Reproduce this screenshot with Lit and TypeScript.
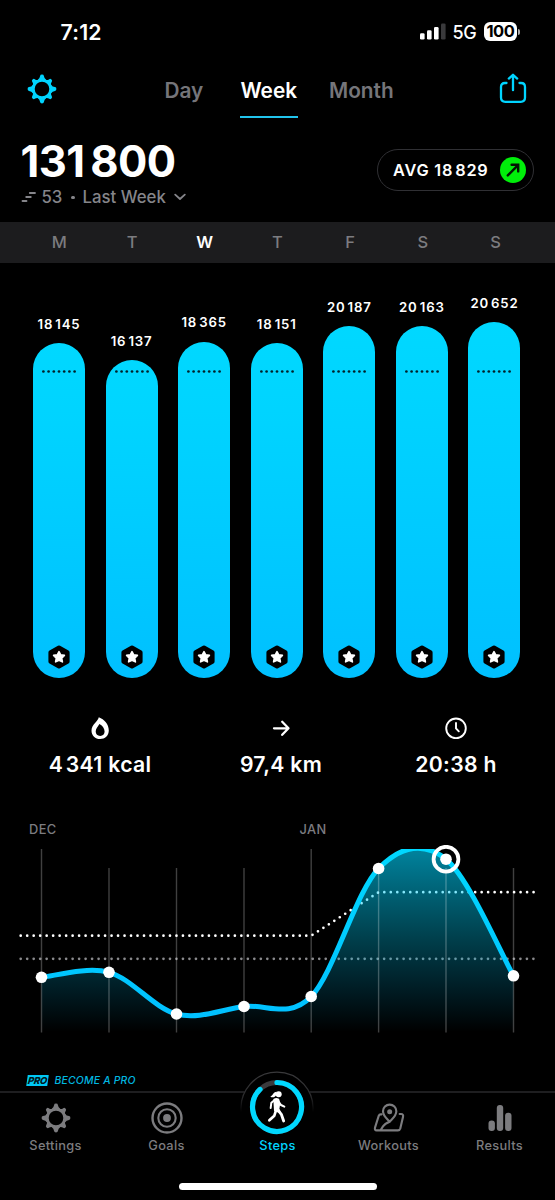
import { LitElement, html, css, svg } from "lit";
import { customElement } from "lit/decorators.js";

const num = (a: string, b: string) => html`${a}<span class="thin">${"\u2009"}</span>${b}`;

const bars = [
  { day: "M", value: num("18", "145"), height: 335 },
  { day: "T", value: num("16", "137"), height: 318 },
  { day: "W", value: num("18", "365"), height: 336.5, active: true },
  { day: "T", value: num("18", "151"), height: 335 },
  { day: "F", value: num("20", "187"), height: 352 },
  { day: "S", value: num("20", "163"), height: 352 },
  { day: "S", value: num("20", "652"), height: 356 },
];

const points: [number, number][] = [
  [41.5, 977.3], [109, 972.3], [176.5, 1014], [244, 1006.5],
  [311.2, 996.5], [378.6, 868.5], [446, 859.2], [513.5, 975.8],
];

// Catmull-Rom spline through the weekly points
function spline(p: [number, number][]): string {
  let d = `M${p[0][0]} ${p[0][1]}`;
  for (let i = 0; i < p.length - 1; i++) {
    const a = p[Math.max(0, i - 1)], b = p[i], c = p[i + 1], e = p[Math.min(p.length - 1, i + 2)];
    d += ` C${b[0] + (c[0] - a[0]) / 6} ${b[1] + (c[1] - a[1]) / 6} ${c[0] - (e[0] - b[0]) / 6} ${c[1] - (e[1] - b[1]) / 6} ${c[0]} ${c[1]}`;
  }
  return d;
}

const gear = () => html`<svg class="gear" viewBox="-15 -15 30 30" width="30" height="30">
  <circle r="8.7" fill="none" stroke="currentColor" stroke-width="2.8" />
  ${[0, 45, 90, 135, 180, 225, 270, 315].map(
    (a) => svg`<path transform="rotate(${a})" d=${a % 90
      ? "M-4.2 -8.6 Q-2 -10 -1.8 -12 Q-1.7 -13.4 0 -13.4 Q1.7 -13.4 1.8 -12 Q2 -10 4.2 -8.6Z"
      : "M-4.6 -8.8 Q-2.1 -10.5 -1.9 -13 Q-1.8 -14.4 0 -14.4 Q1.8 -14.4 1.9 -13 Q2.1 -10.5 4.6 -8.8Z"} fill="currentColor" />`
  )}
</svg>`;

@customElement("app-root")
export class AppRoot extends LitElement {
  static styles = css`
    :host {
      display: flex; flex-direction: column; width: 555px; height: 1200px; overflow: hidden;
      background: #000; color: #fff; font-family: Inter, "Liberation Sans", sans-serif;
      font-weight: 600; box-sizing: border-box;
    }
    * { box-sizing: border-box; }
    svg { display: block; flex: none; }
    .thin { letter-spacing: -0.8px; white-space: pre; }
    .status { display: flex; align-items: center; height: 63px; padding: 0 35px 0 60.5px; flex: none; }
    .time { font-size: 21.2px; letter-spacing: 0.2px; flex: 1; }
    .net { font-size: 18px; font-weight: 500; margin: 2px 8px 0 7px; letter-spacing: -0.5px; width: 23.5px; }
    .battery { display: flex; align-items: center; }
    .cell { width: 33px; height: 19px; border-radius: 6px; background: #fff; color: #000; font-size: 16.5px;
      font-weight: 700; line-height: 19px; text-align: center; letter-spacing: -0.4px; }
    .nub { width: 2px; height: 6px; margin-left: 1px; border-radius: 0 2px 2px 0; background: #aaa; }
    .header { display: flex; height: 55px; padding: 0 28px 0 26.5px; flex: none; }
    .header .gear, .cyan { color: #00d4ff; }
    .header .gear { margin-top: 10.5px; }
    .tabs { display: flex; flex: 1; padding-left: 108px; color: #75757a; font-size: 20.8px; line-height: 55px; }
    .tab.day { width: 76px; }
    .tab.week { width: 58.5px; color: #fff; border-bottom: 2.5px solid #21c4ec; text-align: center; height: 54.5px; margin-left: -1px; }
    .tab.month { margin-left: 31px; }
    .share { margin-top: 9px; }
    .summary { display: flex; height: 104px; padding: 0 21px 0 20.5px; justify-content: space-between; flex: none; }
    .total { font-size: 43.5px; font-weight: 650; line-height: 52px; margin-top: 16.5px; letter-spacing: -0.6px; white-space: nowrap; }
    .sub { display: flex; align-items: center; color: #85858a; font-size: 16.8px; line-height: 20px; font-weight: 500; margin-top: 0.5px; }
    .sub svg { margin-right: 6px; }
    .sub .dot { width: 3.6px; height: 3.6px; border-radius: 2px; background: currentColor; margin: 1px 8px 0 8.5px; }
    .sub .chev { margin: 0 0 0 8px; }
    .pill { display: flex; align-items: center; width: 157px; height: 42px; border: 1px solid #303034;
      border-radius: 21px; margin-top: 31px; padding: 0 7px 0 15px; font-size: 16.3px; font-weight: 560; letter-spacing: 0.8px; white-space: nowrap; }
    .pill svg { margin-left: auto; }
    .strip { display: grid; grid-template-columns: repeat(7, 1fr); height: 41px; background: #1c1c1e; padding: 0 23px; flex: none;
      text-align: center; font-size: 16.5px; line-height: 41px; font-weight: 500; color: #7c7c80; }
    .strip .on { color: #fff; font-weight: 600; }
    .bars { display: grid; grid-template-columns: repeat(7, 1fr); align-items: end; height: 415px; padding: 0 24.3px 0 22.7px; flex: none; }
    .col { display: flex; flex-direction: column; align-items: center; }
    .val { font-size: 13.2px; line-height: 18px; letter-spacing: 0.8px; margin-bottom: 10.5px; white-space: nowrap; }
    .val .thin { letter-spacing: 0; }
    .bar { width: 52px; border-radius: 26px; display: flex; flex-direction: column; align-items: center; justify-content: space-between;
      background: linear-gradient(#00d8ff 0, #00d4ff 20%, #00c0ff 100%); padding-bottom: 9.5px; }
    .goal { display: flex; flex-direction: column; justify-content: flex-end; }
    .stats { display: grid; grid-template-columns: 180px 182px 168px; padding: 38px 0 0 10px; height: 143px; flex: none; font-size: 21.2px; font-weight: 560; letter-spacing: 0.3px; }
    .stat { display: flex; flex-direction: column; align-items: center; gap: 10px; line-height: 26px; white-space: nowrap; }
    .months { display: flex; gap: 243px; height: 24px; padding-left: 29px; font-size: 12.8px; line-height: 18px; font-weight: 500; letter-spacing: 0.4px; color: #7c7c80; flex: none; }
    .trend { flex: none; }
    .pro { display: flex; align-items: center; height: 22px; margin-top: 34px; padding-left: 27px; flex: none; color: #00b8e0;
      font-size: 10.4px; font-style: italic; font-weight: 500; letter-spacing: 0.2px; }
    .badge { width: 21px; height: 11px; transform: skewX(-8deg); background: #00c8f5; color: #001820; font-size: 9.5px; font-weight: 800;
      line-height: 11px; text-align: center; letter-spacing: -0.3px; margin-right: 6.5px; }
    .nav { display: grid; grid-template-columns: repeat(5, 1fr); height: 92px; border-top: 2px solid #1e1e20; flex: none; color: #7c7c7f;
      font-size: 12.8px; font-weight: 500; letter-spacing: 0.3px; }
    .item { display: flex; flex-direction: column; align-items: center; line-height: 18px; }
    .icon { display: flex; align-items: center; justify-content: center; height: 44px; padding-top: 5px; }
    .item.steps .icon { position: relative; top: -8px; left: -0.5px; padding: 0; }
    .home { width: 198px; height: 7px; border-radius: 4px; background: #fff; margin: 0 auto; flex: none; }
  `;

  render() {
    const line = spline(points);
    return html`
      <div class="status">
        <div class="time">7:12</div>
        <svg width="26" height="17" viewBox="0 0 26 17" fill="#fff">
          <rect x="0" y="10.3" width="4.6" height="6.2" rx="1.3" /><rect x="7" y="7.3" width="4.6" height="9.2" rx="1.3" />
          <rect x="14" y="4" width="4.6" height="12.5" rx="1.3" /><rect x="21" y="0.5" width="4.6" height="16" rx="1.3" fill="#3a3a3c" />
        </svg>
        <div class="net">5G</div>
        <div class="battery"><div class="cell">100</div><div class="nub"></div></div>
      </div>

      <div class="header">
        ${gear()}
        <div class="tabs"><div class="tab day">Day</div><div class="tab week">Week</div><div class="tab month">Month</div></div>
        <svg class="share cyan" width="28" height="34" viewBox="0 0 28 34" fill="none" stroke="currentColor" stroke-width="2.3" stroke-linecap="round" stroke-linejoin="round">
          <path d="M7.5 11H6Q2 11 2 15V25.5Q2 29.8 6.3 29.8H21.7Q26 29.8 26 25.5V15Q26 11 22 11H20.5" />
          <path d="M14 18.2V3.4M9.8 6.6L14 2.8L18.2 6.6" />
        </svg>
      </div>

      <div class="summary">
        <div>
          <div class="total">${num("131", "800")}</div>
          <div class="sub">
            <svg width="15" height="12" viewBox="0 0 15 12" stroke="currentColor" stroke-width="1.8" stroke-linecap="round">
              <path d="M1.5 10H5.5M5.2 6H9.8M8.8 2H14" />
            </svg>53<span class="dot"></span>Last Week
            <svg class="chev" width="12" height="8" viewBox="0 0 12 8" fill="none" stroke="currentColor" stroke-width="1.8" stroke-linecap="round" stroke-linejoin="round"><path d="M1.2 1.6L6 6L10.8 1.6" /></svg>
          </div>
        </div>
        <div class="pill"><span>AVG ${num("18", "829")}</span>
          <svg width="26" height="26" viewBox="0 0 26 26"><circle cx="13" cy="13" r="13" fill="#00ee0a" />
            <path d="M7.8 18.4L17.3 8.9M11.6 7.8H18.2V14.4" fill="none" stroke="#031503" stroke-width="2.4" stroke-linecap="round" stroke-linejoin="miter" /></svg>
        </div>
      </div>

      <div class="strip">${bars.map((b) => html`<div class=${b.active ? "on" : ""}>${b.day}</div>`)}</div>

      <div class="bars">
        ${bars.map((b) => html`<div class="col">
          <div class="val">${b.value}</div>
          <div class="bar" style="height:${b.height}px">
            <div class="goal" style="height:${b.height - 305}px">
              <svg width="34" height="3" viewBox="0 0 34 3" fill="#00222a">
                ${[0, 1, 2, 3, 4, 5, 6].map((i) => svg`<circle cx=${1.4 + i * 5.2} cy="1.5" r="1.35" />`)}
              </svg>
            </div>
            <svg width="22" height="24" viewBox="-11 -12 22 24">
              <path d="M0 -9.2L8.4 -4.6V4.6L0 9.2L-8.4 4.6V-4.6Z" fill="#000" stroke="#000" stroke-width="4.4" stroke-linejoin="round" />
              <path d="M0 -5.4L1.7 -2.1L5.4 -1.6L2.7 1.1L3.4 4.9L0 3.2L-3.4 4.9L-2.7 1.1L-5.4 -1.6L-1.7 -2.1Z" fill="#fff" stroke="#fff" stroke-width="1.6" stroke-linejoin="round" />
            </svg>
          </div>
        </div>`)}
      </div>

      <div class="stats">
        <div class="stat">
          <svg width="24" height="25" viewBox="0 0 24 25"><path fill="#fff" fill-rule="evenodd" d="M10.8 1.2C10 5.4 3.5 8.5 3.5 14.7C3.5 19.6 7.3 23 12.1 23C17 23 20.8 19.6 20.8 14.5C20.8 8 16.3 3.4 10.8 1.2ZM11.4 8.1C9.8 11 7.7 12.4 7.7 15.6C7.7 18.2 9.5 19.9 12.2 19.9C14.9 19.9 16.6 18.2 16.6 15.6C16.6 12.4 14.2 9.6 11.4 8.1Z" /></svg>
          <span>${num("4", "341")} kcal</span>
        </div>
        <div class="stat">
          <svg width="24" height="25" viewBox="0 0 24 25" fill="none" stroke="#fff" stroke-width="2.3" stroke-linecap="round" stroke-linejoin="round"><path d="M5 12.3H19M13.2 5.8L19.5 12.3L13.2 18.8" /></svg>
          97,4 km
        </div>
        <div class="stat">
          <svg width="24" height="25" viewBox="0 0 24 25" fill="none" stroke="#fff" stroke-width="1.9" stroke-linecap="round"><circle cx="12" cy="12.3" r="9.8" /><path d="M12 7V12.3L14.8 15.3" /></svg>
          20:38 h
        </div>
      </div>

      <div class="months"><span>DEC</span><span>JAN</span></div>
      <svg class="trend" width="555" height="190" viewBox="0 845 555 190">
        <defs>
          <linearGradient id="area" gradientUnits="userSpaceOnUse" x1="0" y1="849" x2="0" y2="1032">
            <stop offset="0" stop-color="#00d4ff" stop-opacity="0.62" /><stop offset="0.5" stop-color="#00c8f0" stop-opacity="0.31" /><stop offset="1" stop-color="#00c0ff" stop-opacity="0" />
          </linearGradient>
          <linearGradient id="stroke" gradientUnits="userSpaceOnUse" x1="0" y1="849" x2="0" y2="1032">
            <stop offset="0" stop-color="#00d8ff" /><stop offset="1" stop-color="#00beff" />
          </linearGradient>
          <clipPath id="plot"><rect x="0" y="849" width="555" height="184" /></clipPath>
        </defs>
        <path d="M20.7 935.7H311.2L378.6 892.2H534" fill="none" stroke="#fff" stroke-width="2.7" stroke-linecap="round" stroke-dasharray="0 6.49" />
        <path d="M20.7 958.8H534" fill="none" stroke="#8a8a8d" stroke-width="2.7" stroke-linecap="round" stroke-dasharray="0 6.49" />
        <g clip-path="url(#plot)">
          <path d="${line} V1032 H41.5 Z" fill="url(#area)" />
        </g>
        ${points.map((p, i) => svg`<path d="M${p[0]} ${i % 4 === 0 ? 849 : 868}V1032.5" stroke="#fff" stroke-opacity="0.25" stroke-width="1.4" />`)}
        <g clip-path="url(#plot)"><path d=${line} fill="none" stroke="url(#stroke)" stroke-width="5" /></g>
        ${points.map((p) => svg`<circle cx=${p[0]} cy=${p[1]} r="5.8" fill="#fff" />`)}
        <circle cx="446" cy="859.2" r="12.4" fill="none" stroke="#fff" stroke-width="3.8" />
      </svg>

      <div class="pro"><span class="badge">PRO</span>BECOME A PRO</div>

      <div class="nav">
        <div class="item"><div class="icon">${gear()}</div>Settings</div>
        <div class="item"><div class="icon">
          <svg width="32" height="32" viewBox="-16 -16 32 32" fill="none" stroke="currentColor"><circle r="14.5" stroke-width="2.4" /><circle r="8.7" stroke-width="2.1" /><circle r="3.9" fill="currentColor" stroke="none" /></svg>
        </div>Goals</div>
        <div class="item steps cyan"><div class="icon">
          <svg width="76" height="76" viewBox="-38 -38 76 76">
            <defs><linearGradient id="arch" gradientUnits="userSpaceOnUse" x1="0" y1="-36" x2="0" y2="5"><stop offset="0" stop-color="#3a3a3c" /><stop offset="0.6" stop-color="#2c2c2e" /><stop offset="1" stop-color="#000" /></linearGradient></defs>
            <circle r="36" fill="#000" /><path d="M-35.8 5A36 36 0 1 1 35.8 5" fill="none" stroke="url(#arch)" stroke-width="1.3" />
            <circle r="24.5" fill="none" stroke="#3a3a3c" stroke-width="4.8" />
            <path d="M0 -24.5A24.5 24.5 0 1 1 -17 -17.6" fill="none" stroke="#00d8ff" stroke-width="5.2" stroke-linecap="round" />
            <g transform="scale(.3333) translate(-291 -170)" fill="#fff" stroke="#fff" stroke-linecap="round" stroke-linejoin="round">
              <circle cx="296" cy="132" r="9" stroke="none" />
              <path d="M290 124C280 124 280 134 271 139C278 142 285 141 289 133Z" stroke="none" />
              <path d="M283 148Q289 144 295 148L298 158L295 176L299 185L285 180Z" stroke-width="6" />
              <path d="M284 149L274 157L272 173" fill="none" stroke-width="6" /><path d="M298 158L303 164L313 169" fill="none" stroke-width="6" />
              <path d="M293 178L304 192L311 212" fill="none" stroke-width="8.5" /><path d="M287 183L283 196L268 210" fill="none" stroke-width="8" />
            </g>
          </svg>
        </div>Steps</div>
        <div class="item"><div class="icon">
          <svg width="32" height="30" viewBox="52 155 96 90" fill="none" stroke="currentColor" stroke-width="6.4" stroke-linecap="round" stroke-linejoin="round">
            <path d="M102 211C96 204 82 195 82 180A20 20 0 0 1 122 180C122 195 108 204 102 211Z" /><circle cx="102" cy="181" r="7.5" fill="currentColor" stroke="none" />
            <path d="M78 189H75Q71 189 69 194L58 229Q56 237 63 237H127Q132 237 134 231L142 197Q144 188 136 188H132M102 211Q87 217 82 225L75 236" />
          </svg>
        </div>Workouts</div>
        <div class="item"><div class="icon">
          <svg width="24" height="28" viewBox="0 0 24 28" fill="currentColor"><rect x="0.5" y="16.5" width="6.4" height="10.5" rx="3" /><rect x="8.8" y="1" width="6.4" height="26" rx="3" /><rect x="17.1" y="8.7" width="6.4" height="18.3" rx="3" /></svg>
        </div>Results</div>
      </div>
      <div class="home"></div>
    `;
  }
}
